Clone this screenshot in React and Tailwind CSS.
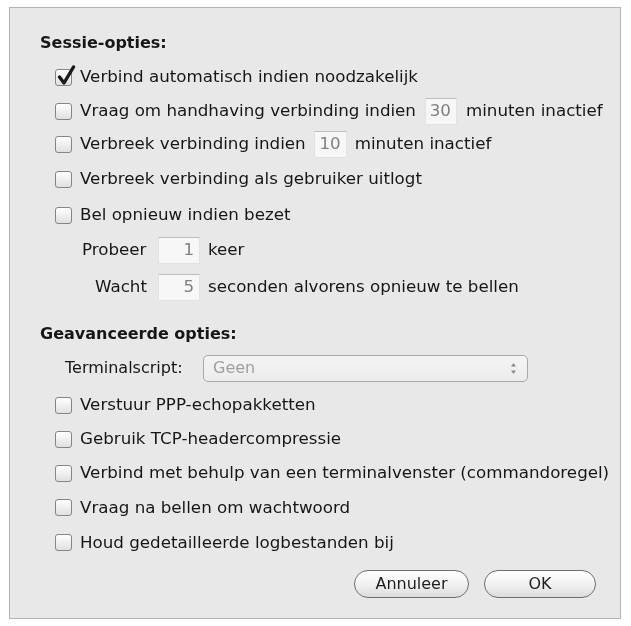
import React from 'react';

const font = { fontFamily: '"DejaVu Sans", "Liberation Sans", sans-serif' };

function CheckBox({ checked }) {
  return (
    <span className="relative inline-block w-[17px] h-[17px] shrink-0 rounded-[3px] border border-[#858585] bg-gradient-to-b from-white to-[#e0e0e0] shadow-[inset_0_1px_0_#fff]">
      {checked && (
        <svg className="absolute -top-[5px] left-[1px]" width="19" height="21" viewBox="0 0 19 21">
          <path d="M2.5 12 L7 18 L16.5 2" fill="none" stroke="#1a1a1a" strokeWidth="3.4" strokeLinecap="round" strokeLinejoin="round" />
        </svg>
      )}
    </span>
  );
}

function Field({ value, w = 'w-[32px]' }) {
  return (
    <span className={`inline-flex items-center justify-end ${w} h-[27px] px-[5px] bg-[#f7f7f7] border border-[#e2e2e2] border-t-[#bdbdbd] text-[#808080]`}>
      {value}
    </span>
  );
}

function CheckRow({ checked, h = 'h-[34px]', children }) {
  return (
    <div className={`flex items-center gap-[8px] pl-[15px] ${h}`}>
      <CheckBox checked={checked} />
      <div className="flex items-center whitespace-nowrap">{children}</div>
    </div>
  );
}

export default function App() {
  return (
    <div className="w-[631px] h-[626px] bg-white pt-[7px] pl-[9px] text-[#161616] text-[16.7px] blur-[0.4px]" style={font}>
      <div className="w-[612px] h-[612px] border border-[#b3b3b3] bg-[#e8e8e8] pt-[18px] pl-[30px] pr-[24px] flex flex-col">
        <div className="h-[34px] flex items-center font-bold text-[16px]">Sessie-opties:</div>
        <CheckRow checked>Verbind automatisch indien noodzakelijk</CheckRow>
        <CheckRow>
          <span>Vraag om handhaving verbinding indien</span>
          <span className="ml-[9px]"><Field value="30" /></span>
          <span className="ml-[9px]">minuten inactief</span>
        </CheckRow>
        <CheckRow h="h-[32px]">
          <span>Verbreek verbinding indien</span>
          <span className="ml-[8px]"><Field value="10" w="w-[33px]" /></span>
          <span className="ml-[8px]">minuten inactief</span>
        </CheckRow>
        <CheckRow h="h-[38px]">Verbreek verbinding als gebruiker uitlogt</CheckRow>
        <CheckRow>Bel opnieuw indien bezet</CheckRow>
        <div className="h-[36px] flex items-center pl-[42px]">
          <span className="w-[76px]">Probeer</span>
          <Field value="1" w="w-[42px]" />
          <span className="ml-[8px]">keer</span>
        </div>
        <div className="h-[38px] flex items-center pl-[55px]">
          <span className="w-[63px]">Wacht</span>
          <Field value="5" w="w-[42px]" />
          <span className="ml-[8px] whitespace-nowrap">seconden alvorens opnieuw te bellen</span>
        </div>

        <div className="mt-[10px] h-[36px] flex items-center font-bold text-[16px]">Geavanceerde opties:</div>
        <div className="h-[32px] flex items-center pl-[25px]">
          <span className="w-[138px] text-[16px] whitespace-nowrap">Terminalscript:</span>
          <div className="w-[325px] h-[27px] rounded-[5px] border border-[#a8a8a8] bg-gradient-to-b from-[#f4f4f4] to-[#ececec] flex items-center justify-between pl-[9px] pr-[10px] text-[#a0a0a0] text-[16px]">
            <span>Geen</span>
            <svg width="7" height="13" viewBox="0 0 7 13">
              <path d="M3.5 1 L6 4.5 H1 Z" fill="#8a8a8a" />
              <path d="M3.5 12 L6 8.5 H1 Z" fill="#8a8a8a" />
            </svg>
          </div>
        </div>
        <div className="mt-[4px]" />
        <CheckRow>Verstuur PPP-echopakketten</CheckRow>
        <CheckRow>Gebruik TCP-headercompressie</CheckRow>
        <CheckRow>Verbind met behulp van een terminalvenster (commandoregel)</CheckRow>
        <CheckRow h="h-[35px]">Vraag na bellen om wachtwoord</CheckRow>
        <CheckRow h="h-[35px]">Houd gedetailleerde logbestanden bij</CheckRow>

        <div className="mt-[10px] flex justify-end gap-[15px]">
          <button className="w-[115px] h-[28px] rounded-full border border-[#6e6e6e] bg-gradient-to-b from-white via-[#f2f2f2] to-[#dcdcdc] text-[#1e1e1e] text-[16px]">
            Annuleer
          </button>
          <button className="w-[112px] h-[28px] rounded-full border border-[#6e6e6e] bg-gradient-to-b from-white via-[#f2f2f2] to-[#dcdcdc] text-[#1e1e1e] text-[16px]">
            OK
          </button>
        </div>
      </div>
    </div>
  );
}
